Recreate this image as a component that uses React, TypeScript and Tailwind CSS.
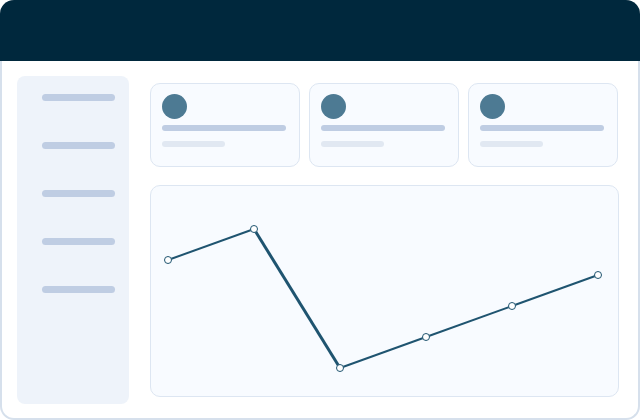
const points = [
  [17, 74],
  [103, 43],
  [189, 182],
  [275, 151],
  [361, 120],
  [447, 89],
];

function StatCard() {
  return (
    <div className="h-[84px] rounded-[10px] border border-[#dde6f2] bg-[#f8fbff] pl-[11px] pt-[10px]">
      <div className="h-[25px] w-[25px] rounded-full bg-[#4d7a93]" />
      <div className="mt-[6px] h-[6px] w-[124px] rounded-full bg-[#bfcde3]" />
      <div className="mt-[10px] h-[6px] w-[63px] rounded-full bg-[#e1e8f2]" />
    </div>
  );
}

function LineChart() {
  return (
    <svg width="467" height="210" className="block">
      {points.slice(1).map(([x, y], i) => {
        const [px, py] = points[i];
        return (
          <line
            key={i}
            x1={px}
            y1={py}
            x2={x}
            y2={y}
            stroke="#1f5470"
            strokeWidth={i === 1 ? 3 : 2}
          />
        );
      })}
      {points.map(([x, y], i) => (
        <circle key={i} cx={x} cy={y} r="3.5" fill="#ffffff" stroke="#1f5470" strokeWidth="1" />
      ))}
    </svg>
  );
}

export default function App() {
  return (
    <div className="flex h-[420px] w-[640px] flex-col bg-white">
      <div className="h-[61px] rounded-t-[14px] bg-[#00283d]" />
      <div className="flex flex-1 rounded-b-[14px] border-x-2 border-b-2 border-[#d6e0ec] pl-[15px] pt-[15px]">
        <div className="flex h-[328px] w-[112px] flex-col gap-[41px] rounded-[8px] bg-[#eef3fa] pl-[25px] pt-[18px]">
          {[0, 1, 2, 3, 4].map((i) => (
            <div key={i} className="h-[7px] w-[73px] rounded-full bg-[#bfcde3]" />
          ))}
        </div>
        <div className="ml-[21px] mt-[7px] w-[468px]">
          <div className="grid grid-cols-[150px_150px_150px] gap-[9px]">
            <StatCard />
            <StatCard />
            <StatCard />
          </div>
          <div className="mt-[18px] h-[212px] w-[469px] overflow-hidden rounded-[10px] border border-[#dde6f2] bg-[#f8fbff]">
            <LineChart />
          </div>
        </div>
      </div>
    </div>
  );
}
